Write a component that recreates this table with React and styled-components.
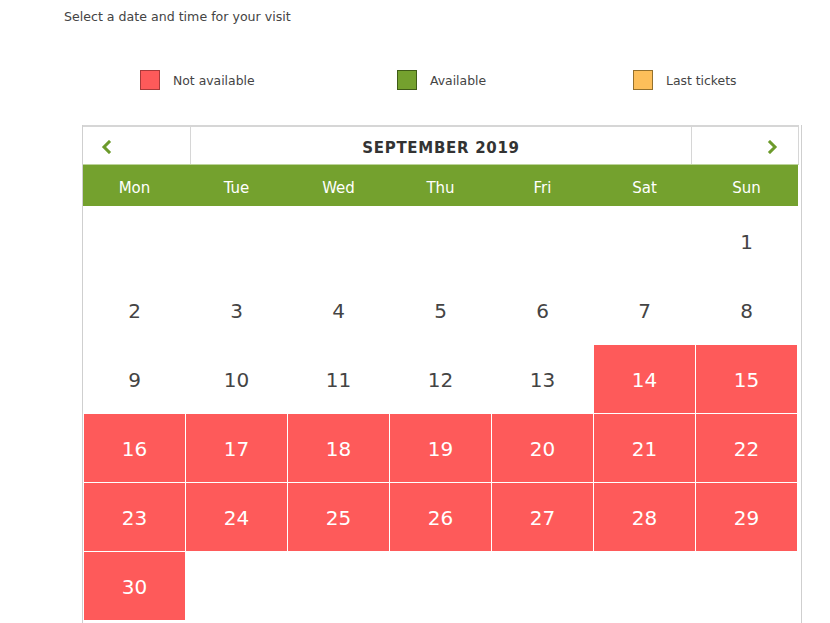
import React from 'react';
import styled, { createGlobalStyle } from 'styled-components';

const GlobalStyle = createGlobalStyle`
  body {
    margin: 0;
    background: #fff;
    font-family: "DejaVu Sans", Verdana, sans-serif;
  }
`;

const legend = [
  { label: 'Not available', fill: '#fe5a5a', edge: '#a83a3a' },
  { label: 'Available', fill: '#74a12e', edge: '#3f5c17' },
  { label: 'Last tickets', fill: '#fdbf5a', edge: '#94702c' },
];

const weekDays = ['Mon', 'Tue', 'Wed', 'Thu', 'Fri', 'Sat', 'Sun'];

// september 2019 starts on a sunday
const days = [...Array(6).fill(null), ...Array.from({ length: 30 }, (_, i) => i + 1)];

function Chevron({ dir }) {
  const points = dir === 'left' ? '8,2 3,7 8,12' : '3,2 8,7 3,12';
  return (
    <svg width="11" height="14" viewBox="0 0 11 14">
      <polyline points={points} fill="none" stroke="#6c9a2b" strokeWidth="3" strokeLinecap="square" />
    </svg>
  );
}

function App() {
  return (
    <Page>
      <GlobalStyle />
      <Intro>Select a date and time for your visit</Intro>

      <Legend>
        {legend.map((item) => (
          <LegendItem key={item.label}>
            <Swatch $fill={item.fill} $edge={item.edge} />
            {item.label}
          </LegendItem>
        ))}
      </Legend>

      <Calendar>
        <Nav>
          <NavBtn $side="left"><Chevron dir="left" /></NavBtn>
          <Month>SEPTEMBER 2019</Month>
          <NavBtn $side="right"><Chevron dir="right" /></NavBtn>
        </Nav>
        <WeekRow>
          {weekDays.map((d) => <WeekDay key={d}>{d}</WeekDay>)}
        </WeekRow>
        <Days>
          {days.map((d, i) => (
            <Day key={i} $off={d !== null && d >= 14}>{d}</Day>
          ))}
        </Days>
      </Calendar>
    </Page>
  );
}

const Page = styled.div`
  padding-top: 9px;
  color: #444;
`;

const Intro = styled.p`
  margin: 0 0 0 64px;
  font-size: 12.6px;
  line-height: 16px;
  color: #444;
`;

const Legend = styled.div`
  display: grid;
  grid-template-columns: 257px 236px auto;
  margin: 45px 0 0 140px;
  height: 20px;
`;

const LegendItem = styled.div`
  display: flex;
  align-items: center;
  gap: 13px;
  font-size: 12.4px;
  color: #444;
`;

const Swatch = styled.span`
  width: 18px;
  height: 18px;
  background: ${(p) => p.$fill};
  border: 1px solid ${(p) => p.$edge};
`;

const Calendar = styled.div`
  box-sizing: border-box;
  width: 720px;
  margin: 35px 0 0 82px;
  border-left: 1px solid #cfcfcf;
  border-right: 1px solid #cfcfcf;
  padding-bottom: 20px;
`;

const Nav = styled.div`
  box-sizing: border-box;
  width: 716px;
  height: 40px;
  display: grid;
  grid-template-columns: 108px 1fr 107px;
  border-top: 2px solid #d6d6d6;
  border-right: 1px solid #d6d6d6;
  border-bottom: 1px solid #bcd39a;
`;

const NavBtn = styled.div`
  display: flex;
  align-items: center;
  justify-content: ${(p) => (p.$side === 'left' ? 'flex-start' : 'flex-end')};
  padding: ${(p) => (p.$side === 'left' ? '2px 0 0 18px' : '2px 20px 0 0')};
  border-${(p) => (p.$side === 'left' ? 'right' : 'left')}: 1px solid #d6d6d6;
`;

const Month = styled.div`
  display: flex;
  align-items: center;
  justify-content: center;
  padding-top: 4px;
  font-weight: bold;
  font-size: 15px;
  letter-spacing: 0.7px;
  color: #333;
`;

const WeekRow = styled.div`
  box-sizing: border-box;
  width: 715px;
  height: 41px;
  padding: 1px 0 0 1px;
  display: grid;
  grid-template-columns: repeat(7, 101px);
  column-gap: 1px;
  background: #74a12e;
`;

const WeekDay = styled.div`
  display: flex;
  align-items: center;
  justify-content: center;
  padding-top: 3px;
  color: #fff;
  font-size: 15px;
`;

const Days = styled.div`
  display: grid;
  grid-template-columns: repeat(7, 101px);
  grid-auto-rows: 68px;
  gap: 1px;
  padding: 1px 0 0 1px;
`;

const Day = styled.div`
  display: flex;
  align-items: center;
  justify-content: center;
  padding-top: 1px;
  font-size: 20px;
  color: ${(p) => (p.$off ? '#fff' : '#444')};
  background: ${(p) => (p.$off ? '#fe5a5a' : 'transparent')};
`;

export default App;
